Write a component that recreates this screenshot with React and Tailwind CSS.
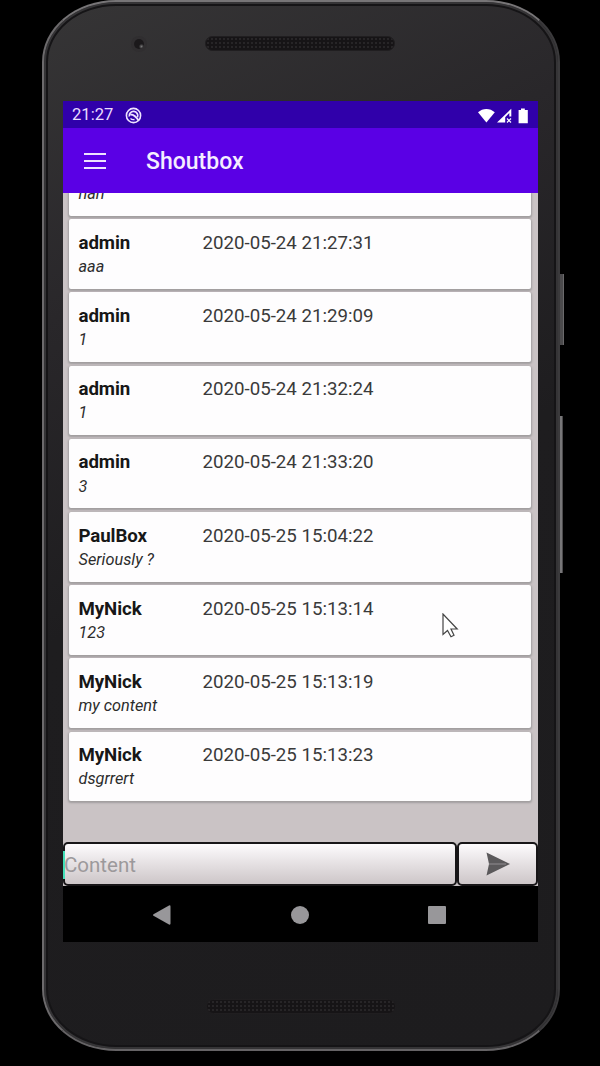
const messages = [
  { nick: "admin", date: "2020-05-24 21:27:31", text: "aaa" },
  { nick: "admin", date: "2020-05-24 21:29:09", text: "1" },
  { nick: "admin", date: "2020-05-24 21:32:24", text: "1" },
  { nick: "admin", date: "2020-05-24 21:33:20", text: "3" },
  { nick: "PaulBox", date: "2020-05-25 15:04:22", text: "Seriously ?" },
  { nick: "MyNick", date: "2020-05-25 15:13:14", text: "123" },
  { nick: "MyNick", date: "2020-05-25 15:13:19", text: "my content" },
  { nick: "MyNick", date: "2020-05-25 15:13:23", text: "dsgrrert" },
];

function Grille() {
  return (
    <div className="h-[15px] w-[190px] rounded-full border border-[#201e20] bg-[#161416] bg-[radial-gradient(#272527_0.8px,transparent_1px)] bg-[size:4px_4px]" />
  );
}

function StatusBar() {
  return (
    <div className="flex h-[27px] shrink-0 items-center bg-[#3000aa] pl-[9px] pr-[9px] pt-[2px] text-white">
      <span className="w-[53px] text-[16.6px] leading-none text-[#e9dcff]">21:27</span>
      <svg className="h-[17px] w-[17px]" viewBox="0 0 17 17" fill="none" stroke="#efe4ff">
        <circle cx="8.5" cy="8.5" r="7.1" strokeWidth="1.6" />
        <path d="M4.300 9.500A4.300 4.300 0 1 1 12.500 10.300" strokeWidth="1.700" />
        <path d="M5.200 7.500Q9.500 7 13.800 13.800" strokeWidth="2" />
        <path d="M5.500 11.500Q7 13 9.500 12.500" strokeWidth="1.300" />
      </svg>
      <div className="flex-1" />
      <svg className="h-[16px] w-[51px]" viewBox="0 0 51 16" fill="white">
        <path d="M0 4.3C4.7-.2 12-.2 16.8 4.3L8.400 14.400Z" />
        <path d="M19 14.400 33.300.7V8.500H31.300V5L27.200 9.200v5.200Z" />
        <path d="M29 10.500l4 4m0-4l-4 4" stroke="white" strokeWidth="1.200" />
        <path d="M43 .5h3.800v1.500h3v13.300h-9.200V2H43Z" />
      </svg>
    </div>
  );
}

function Card({ nick, date, text }) {
  return (
    <div className="h-[69.6px] shrink-0 rounded-[2px] bg-[#fefdfe] pl-[9.5px] pt-[12px] shadow-[0_1px_2px_1px_#a19e9f]">
      <div className="flex h-[24px] items-center text-[18.7px] leading-none">
        <span className="w-[124px] font-bold tracking-[-0.1px] text-[#171717]">{nick}</span>
        <span className="text-[#3a3a3a]">{date}</span>
      </div>
      <div className="flex h-[24px] items-center text-[16.3px] italic leading-none text-[#2c2c2c]">{text}</div>
    </div>
  );
}

export default function App() {
  return (
    <div className="relative h-[1066px] w-[600px] overflow-hidden bg-black pl-[42px] font-[Roboto,sans-serif]">
      <div className="absolute left-[558px] top-[274px] h-[71px] w-[6px] border-r border-[#6a696b] bg-[#4b4a4c]" />
      <div className="absolute left-[558px] top-[416px] h-[157px] w-[5px] border-r border-[#4b4a4c] bg-[#777678]" />
      <div className="relative flex h-[1051px] w-[518px] flex-col items-center rounded-[74px/62px] border-2 border-b-[#656365] border-l-[#6c6a6c] border-r-[#3b3a3c] border-t-[#777577] bg-[linear-gradient(155deg,#363536_0%,#29272a_25%,#1e1d1f_50%,#1d1c1e_100%)] shadow-[inset_0_0_0_2px_#353436,inset_0_0_0_4px_#151416]">
        <div className="relative -left-px flex h-[99px] w-[475px] shrink-0 justify-center pt-[34px]">
          <div className="absolute left-[68px] top-[34px] flex h-4 w-4 items-center justify-center rounded-full bg-[#302e30]">
            <div className="h-[10px] w-[10px] rounded-full bg-[radial-gradient(circle_at_75%_75%,#777_0%,#1b191b_25%)]" />
          </div>
          <Grille />
        </div>
        <div className="mr-px flex h-[841px] w-[475px] shrink-0 flex-col overflow-hidden bg-black">
          <StatusBar />
          <header className="flex h-[65px] shrink-0 items-center bg-[#5a00e5] pl-[21px] text-white">
            <div className="flex w-[62px] flex-col gap-[5px]">
              <div className="h-[2px] w-[22px] bg-[#eee3ff]" />
              <div className="h-[2px] w-[22px] bg-[#eee3ff]" />
              <div className="h-[2px] w-[22px] bg-[#eee3ff]" />
            </div>
            <h1 className="pt-[2px] text-[23px] font-medium leading-none text-[#f5edff]">Shoutbox</h1>
          </header>
          <main className="flex h-[649px] shrink-0 flex-col justify-start overflow-hidden bg-[#cac3c5] pl-[6px] pr-[7px]">
            <div className="flex flex-col gap-[3.6px]">
              <div className="h-[22.6px] shrink-0 rounded-b-[2px] bg-[#fefdfe] pl-[9.5px] shadow-[0_1px_2px_1px_#a19e9f]">
                <div className="-mt-[7px] text-[16.3px] italic leading-none text-[#2c2c2c]">hah</div>
              </div>
              {messages.map((m) => (
                <Card key={m.date} {...m} />
              ))}
            </div>
          </main>
          <div className="relative flex h-[44px] shrink-0 bg-[#c5bfc1]">
            <div className="flex w-[394px] items-center rounded-[5px] border-2 border-[#171517] bg-linear-to-b from-[#fdfbfd] to-[#cdc6c8] text-[20.5px] leading-none text-[#9c999b]">
              <span className="-ml-px pt-[3px]">Content</span>
            </div>
            <button className="flex flex-1 items-center justify-center rounded-[5px] border-2 border-[#171517] bg-linear-to-b from-[#fdfbfd] to-[#cdc6c8]">
              <svg className="h-[24px] w-[24px]" viewBox="0 0 24 24">
                <path d="M.5.5 24 12 .5 23.500 3 12Z" fill="#5b595b" />
                <path d="M3 12H20" stroke="#858385" strokeWidth="1.300" />
              </svg>
            </button>
            <div className="absolute left-0 top-[9px] h-[28px] w-[2px] bg-[#43e0b8]" />
          </div>
          <nav className="flex h-[56px] items-center justify-between pl-[90px] pr-[92px] pt-px">
            <svg className="h-[20px] w-[18px]" viewBox="0 0 18 20" fill="#98979a">
              <path d="M.5 9.200 16 .5q1.500-.6 1.500 1v17q0 1.600-1.500 1L.5 10.800Q-.5 10 .5 9.200Z" />
            </svg>
            <div className="ml-px h-[18px] w-[18px] rounded-full bg-[#98979a]" />
            <div className="h-[18px] w-[18px] rounded-[1px] bg-[#98979a]" />
          </nav>
        </div>
        <div className="mt-[57px]">
          <Grille />
        </div>
      </div>
      <svg className="absolute left-[442px] top-[613px] h-[25px] w-[17px]" viewBox="0 0 17 25">
        <path d="M1 1v20.500l4.500-4 3.500 6.200 3-1.400-3-6.300h6.200Z" fill="white" stroke="#444" strokeWidth="1.200" />
      </svg>
    </div>
  );
}
